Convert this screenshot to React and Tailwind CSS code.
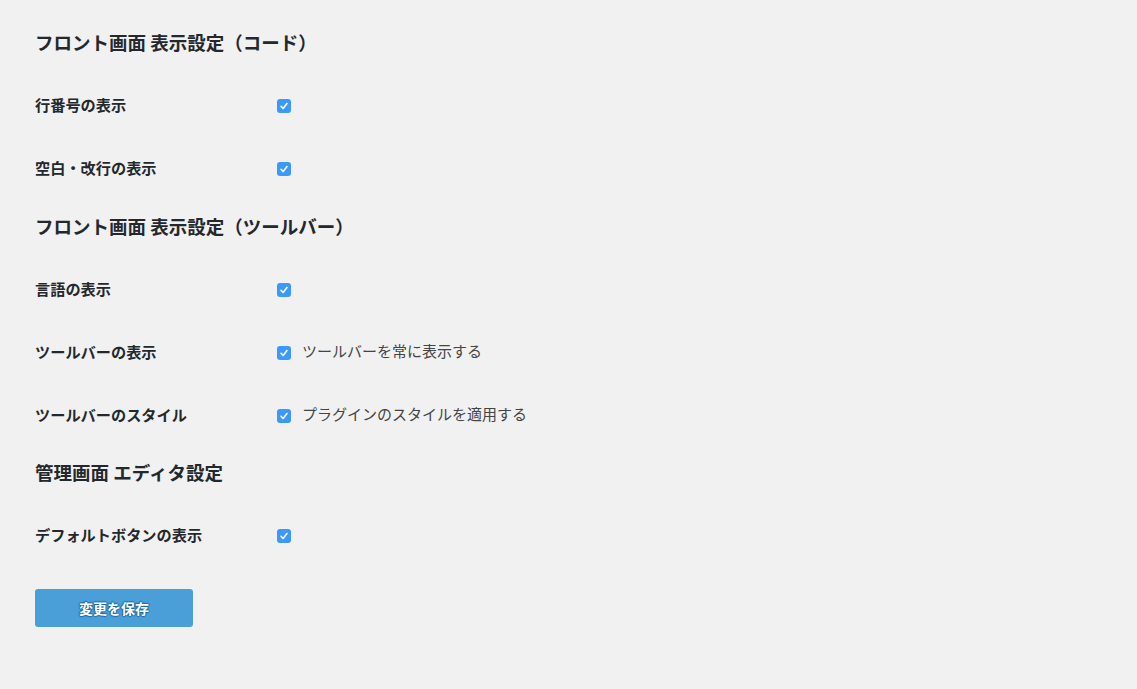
import React from "react";

const font = { fontFamily: '"Noto Sans CJK JP", "Noto Sans", sans-serif' };

function Check() {
  return (
    <span className="inline-flex h-[14px] w-[14px] shrink-0 items-center justify-center rounded-[3px] bg-[#3b99fc]">
      <svg width="10" height="10" viewBox="0 0 10 10" fill="none">
        <path d="M2 5.3 L4.1 7.4 L8 2.6" stroke="white" strokeWidth="1.6" strokeLinecap="round" strokeLinejoin="round" />
      </svg>
    </span>
  );
}

function Row({ label, text }) {
  return (
    <div className="flex h-[63px] items-center">
      <div className="w-[242px] text-[15.2px] font-bold text-[#23282d]">{label}</div>
      <div className="flex items-center gap-[11px] pt-[2px]">
        <Check />
        {text && <span className="text-[15px] text-[#444] -mt-[3px]">{text}</span>}
      </div>
    </div>
  );
}

function Heading({ children, className = "" }) {
  return (
    <div className={"flex h-[28px] items-center text-[18.5px] font-bold text-[#23282d] " + className}>
      {children}
    </div>
  );
}

export default function App() {
  return (
    <div className="min-h-[689px] w-full bg-[#f1f1f1] px-[35px] pt-[29px]" style={font}>
      <Heading className="mb-[16px]">フロント画面 表示設定（コード）</Heading>
      <Row label="行番号の表示" />
      <Row label="空白・改行の表示" />
      <Heading className="mt-[14px] mb-[16px]">フロント画面 表示設定（ツールバー）</Heading>
      <Row label="言語の表示" />
      <Row label="ツールバーの表示" text="ツールバーを常に表示する" />
      <Row label="ツールバーのスタイル" text="プラグインのスタイルを適用する" />
      <Heading className="mt-[13px] mb-[16px]">管理画面 エディタ設定</Heading>
      <Row label="デフォルトボタンの表示" />
      <button
        className="mt-[23px] flex h-[38px] w-[158px] items-center justify-center rounded-[3px] bg-[#4a9fd8] text-[14px] font-bold text-white"
        style={{ textShadow: "0 -1px 1px #1e6a9e, 1px 0 1px #1e6a9e, 0 1px 1px #1e6a9e, -1px 0 1px #1e6a9e" }}
      >
        変更を保存
      </button>
    </div>
  );
}
